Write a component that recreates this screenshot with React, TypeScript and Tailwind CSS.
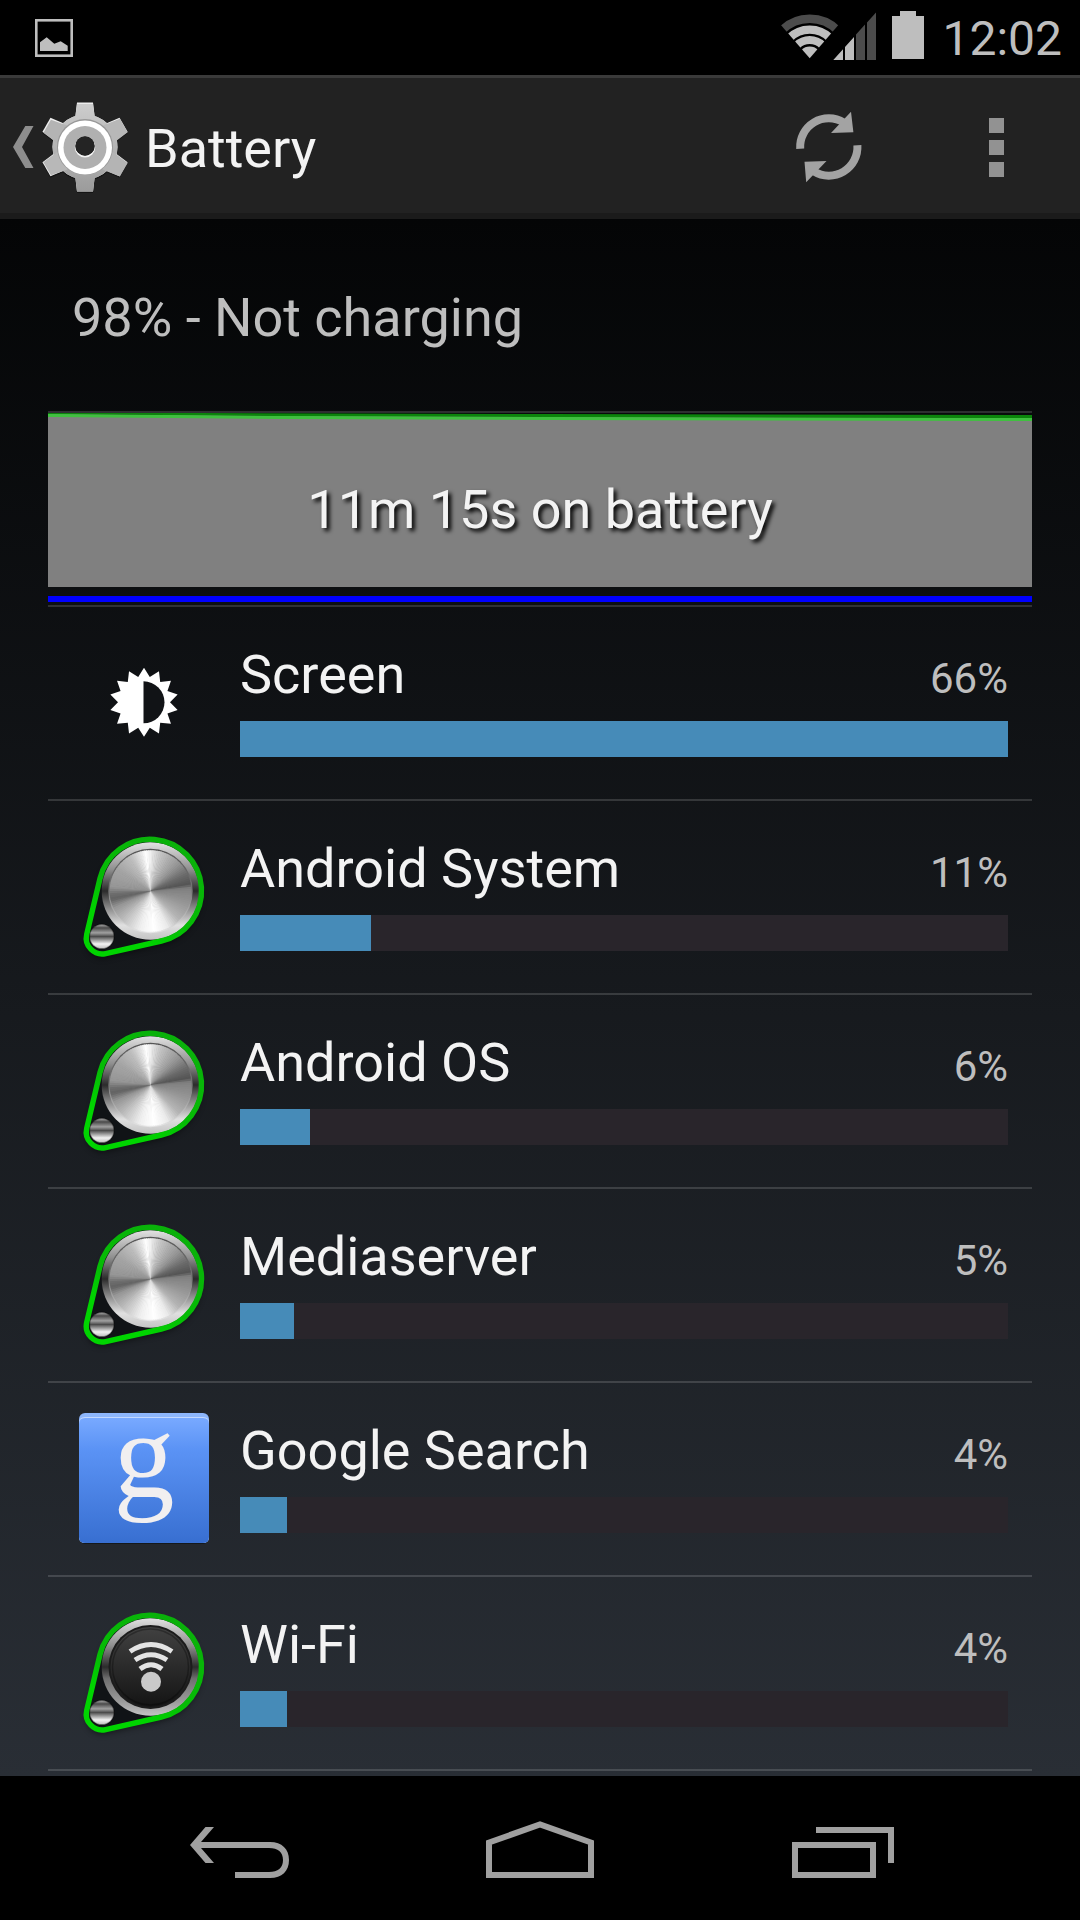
import type { ReactNode } from "react";

type KnobFace = "metal" | "wifi";

type UsageItem = {
  name: string;
  percent: number;
  barWidth: number;
  icon: ReactNode;
};

// Brightness of the brushed metal by angle, clockwise from the top.
const METAL_STOPS: [number, number][] = [
  [0, 236],
  [15, 196],
  [45, 150],
  [66, 104],
  [80, 84],
  [86, 128],
  [110, 150],
  [135, 180],
  [155, 235],
  [175, 255],
  [195, 240],
  [220, 195],
  [245, 150],
  [258, 98],
  [266, 110],
  [276, 150],
  [305, 165],
  [330, 190],
  [345, 228],
  [353, 255],
  [360, 236],
];

const WEDGE_STEP = 3;

function metalShade(angle: number) {
  const next = METAL_STOPS.findIndex(([stop]) => stop > angle);
  if (next < 1) return METAL_STOPS[0][1];
  const [fromAngle, fromShade] = METAL_STOPS[next - 1];
  const [toAngle, toShade] = METAL_STOPS[next];
  const ratio = (angle - fromAngle) / (toAngle - fromAngle);
  return Math.round(fromShade + (toShade - fromShade) * ratio);
}

function polar(cx: number, cy: number, radius: number, angle: number) {
  const rad = (angle * Math.PI) / 180;
  return `${(cx + radius * Math.sin(rad)).toFixed(2)} ${(cy - radius * Math.cos(rad)).toFixed(2)}`;
}

function MetalDisc({ cx, cy, radius }: { cx: number; cy: number; radius: number }) {
  const wedges = Array.from({ length: 360 / WEDGE_STEP }, (_, index) => index * WEDGE_STEP);

  return (
    <g>
      {wedges.map((angle) => {
        const shade = metalShade(angle + WEDGE_STEP / 2);
        return (
          <path
            key={angle}
            d={`M${cx} ${cy}L${polar(cx, cy, radius, angle)}A${radius} ${radius} 0 0 1 ${polar(cx, cy, radius, angle + WEDGE_STEP + 1)}Z`}
            fill={`rgb(${shade} ${shade} ${shade})`}
          />
        );
      })}
    </g>
  );
}

function KnobIcon({ id, face }: { id: string; face: KnobFace }) {
  const belt =
    "M28 53.5A51.5 51.5 0 1 1 89.3 116L33.7 128.6A16 16 0 0 1 14.7 109.3Z";

  return (
    <svg viewBox="0 0 144 144" className="size-36" aria-hidden="true">
      <defs>
        <linearGradient id={`${id}-ring`} x1="0" y1="0" x2="0" y2="1">
          <stop offset="0" stopColor="#e2e2e2" />
          <stop offset="0.28" stopColor="#8f8f8f" />
          <stop offset="0.5" stopColor="#2b2b2b" />
          <stop offset="0.62" stopColor="#6f6f6f" />
          <stop offset="0.85" stopColor={face === "metal" ? "#e0e0e0" : "#9a9a9a"} />
          <stop offset="1" stopColor="#c4c4c4" />
        </linearGradient>
        <linearGradient id={`${id}-edge`} x1="0" y1="0" x2="0" y2="1">
          <stop offset="0" stopColor="#555555" />
          <stop offset="0.5" stopColor="#777777" />
          <stop offset="1" stopColor="#e8e8e8" />
        </linearGradient>
        <linearGradient id={`${id}-face`} x1="0" y1="0" x2="0" y2="1">
          <stop offset="0" stopColor="#414141" />
          <stop offset="1" stopColor="#141414" />
        </linearGradient>
        <linearGradient id={`${id}-small`} x1="0" y1="0" x2="0" y2="1">
          <stop offset="0" stopColor="#b5b5b5" />
          <stop offset="0.15" stopColor="#4a4a4a" />
          <stop offset="0.35" stopColor="#a0a0a0" />
          <stop offset="0.5" stopColor="#4c4c4c" />
          <stop offset="0.8" stopColor="#f2f2f2" />
          <stop offset="1" stopColor="#bdbdbd" />
        </linearGradient>
        <linearGradient id={`${id}-belt`} x1="0.8" y1="0" x2="0.2" y2="1">
          <stop offset="0" stopColor="#0ab00a" />
          <stop offset="0.55" stopColor="#05bc05" />
          <stop offset="0.8" stopColor="#00d400" />
        </linearGradient>
        <filter id={`${id}-shadow`} x="-20%" y="-20%" width="140%" height="140%">
          <feGaussianBlur stdDeviation="3" />
        </filter>
      </defs>
      <path d={belt} fill="#000" opacity="0.5" transform="translate(0 4)" filter={`url(#${id}-shadow)`} />
      <path d={belt} fill="#101316" />
      <circle cx="78.5" cy="66" r="48.8" fill={`url(#${id}-ring)`} />
      {face === "metal" ? (
        <>
          <circle cx="78.5" cy="66" r="42.2" fill={`url(#${id}-edge)`} />
          <MetalDisc cx={78.5} cy={66} radius={40.8} />
        </>
      ) : (
        <>
          <circle cx="78.5" cy="66" r="42" fill="#1c1c1c" />
          <circle cx="78.5" cy="66" r="40" fill={`url(#${id}-face)`} />
          <circle cx="78.5" cy="66" r="38" fill="none" stroke="#000" strokeOpacity="0.3" strokeWidth="1.5" />
          <g fill="none" stroke="#e4e4e4" strokeWidth="5">
            <path d="M58 50.5Q79 36.5 100 50.5" />
            <path d="M63 59Q79 48.5 95 59" />
            <path d="M68 68Q79 59.5 90 68" />
          </g>
          <circle cx="79" cy="80.7" r="10" fill="#c9c9c9" />
        </>
      )}
      <circle cx="29.8" cy="111.5" r="12.3" fill={`url(#${id}-small)`} />
      <circle cx="29.8" cy="111.5" r="12.3" fill="none" stroke="#000" strokeOpacity="0.35" strokeWidth="1.5" />
      <path d={belt} fill="none" stroke={`url(#${id}-belt)`} strokeWidth="5.4" />
    </svg>
  );
}

function BrightnessIcon() {
  const points = Array.from({ length: 28 }, (_, index) =>
    polar(36, 35.3, index % 2 === 0 ? 34.5 : 26, (index * 360) / 28),
  ).join(" ");

  return (
    <svg viewBox="0 0 72 72" className="size-18" aria-hidden="true">
      <polygon points={points} fill="#fff" />
      <path d="M35.5 14.3A21 21 0 0 1 35.5 56.3Z" fill="#111316" />
    </svg>
  );
}

function GoogleIcon() {
  return (
    <svg viewBox="0 1 132 132" className="size-33 overflow-visible" aria-hidden="true">
      <defs>
        <linearGradient id="google-tile" x1="0" y1="0" x2="0" y2="1">
          <stop offset="0" stopColor="#78a9ff" />
          <stop offset="0.25" stopColor="#5b93f5" />
          <stop offset="1" stopColor="#386fd1" />
        </linearGradient>
      </defs>
      <rect x="1" y="2" width="130" height="130" rx="6" fill="#15191c" />
      <rect x="1" y="1" width="130" height="130" rx="6" fill="#8db6fb" />
      <path d="M1 11Q1 5 7 5H125Q131 5 131 11V125Q131 131 125 131H7Q1 131 1 125Z" fill="#c3d8fd" />
      <path d="M1 12Q1 6 7 6H125Q131 6 131 12V125Q131 131 125 131H7Q1 131 1 125Z" fill="url(#google-tile)" />
      <text
        x="66"
        y="85"
        textAnchor="middle"
        fontFamily="'Liberation Serif', serif"
        fontSize="122"
        fill="#f1eff0"
      >
        g
      </text>
    </svg>
  );
}

function GearIcon() {
  return (
    <svg viewBox="0 0 96 96" className="size-24" aria-hidden="true">
      <defs>
        <linearGradient id="gear-body" x1="0" y1="0" x2="0" y2="96" gradientUnits="userSpaceOnUse">
          <stop offset="0" stopColor="#d0d0d0" />
          <stop offset="1" stopColor="#999999" />
        </linearGradient>
        <mask id="gear-hole">
          <rect width="96" height="96" fill="#fff" />
          <circle cx="48" cy="47" r="9.7" fill="#000" />
        </mask>
        <g id="gear-shape">
          <circle cx="48" cy="48" r="32.5" />
          <path d="M40 3.5H56L58 20V76L56 92.5H40L38 76V20Z" />
          <path d="M40 3.5H56L58 20V76L56 92.5H40L38 76V20Z" transform="rotate(60 48 48)" />
          <path d="M40 3.5H56L58 20V76L56 92.5H40L38 76V20Z" transform="rotate(120 48 48)" />
        </g>
      </defs>
      <g mask="url(#gear-hole)">
        <use href="#gear-shape" fill="#000" opacity="0.4" y="1.5" />
        <use href="#gear-shape" fill="#eeeeee" />
      </g>
      <g mask="url(#gear-hole)">
        <circle cx="48" cy="48" r="32.5" fill="url(#gear-body)" />
        <path d="M40 5H56L58 20V76L56 92.5H40L38 76V20Z" fill="url(#gear-body)" />
        <path d="M40.5 4H56L58 20V76L55 92H40L38 76V20Z" fill="#b8b8b8" transform="rotate(60 48 48.6)" />
        <path d="M40 4H55.5L58 20V76L56 92H41L38 76V20Z" fill="#b4b4b4" transform="rotate(120 48 48.6)" />
        <circle cx="48" cy="48" r="28" fill="#989898" />
        <circle cx="48" cy="48.5" r="27" fill="#fff" />
        <circle cx="48" cy="48.5" r="21.5" fill="#b0b0b0" />
        <circle cx="48" cy="48.4" r="10.2" fill="#f4f4f4" />
      </g>
      <circle cx="48" cy="47" r="9.7" fill="#242424" />
    </svg>
  );
}

function StatusBar() {
  return (
    <div className="flex h-[75px] items-center bg-black pr-[18px] pb-[3px] pl-[35px] text-[#bebebe]">
      <svg viewBox="0 0 38 42" className="h-[42px] w-[38px]" aria-hidden="true">
        <rect x="1.3" y="5.3" width="35.4" height="35.4" fill="none" stroke="currentColor" strokeWidth="2.6" />
        <path d="M5 27.3L11.7 22.3L19.3 28.7L25.7 26.3L32.7 30.7V36H5Z" fill="currentColor" />
      </svg>
      <div className="ml-auto flex items-center gap-4">
        <svg viewBox="0 0 96 48" className="h-12 w-24" aria-hidden="true">
          <defs>
            <clipPath id="wifi-fan">
              <path d="M29.7 46.3L-10 0.3L29.7 -20L69.4 0.3Z" />
            </clipPath>
          </defs>
          <g clipPath="url(#wifi-fan)" fill="none">
            <circle cx="29.7" cy="46.3" r="39.5" stroke="#4c4c4c" strokeWidth="8.4" />
            <circle cx="29.7" cy="46.3" r="28.7" stroke="currentColor" strokeWidth="8.4" />
            <circle cx="29.7" cy="46.3" r="18.2" stroke="currentColor" strokeWidth="8" />
            <circle cx="29.7" cy="46.3" r="11.8" fill="currentColor" />
          </g>
          <path d="M53.3 48L63 37.2V48ZM65 35V48H74V25Z" fill="currentColor" />
          <path d="M76 22.6L85 12.6V48H76ZM87 10.4L96 0.4V48H87Z" fill="#4c4c4c" />
        </svg>
        <svg viewBox="0 0 32 50" className="h-[50px] w-8" aria-hidden="true">
          <path d="M8 0H24V5H32V48H0V5H8Z" fill="currentColor" />
        </svg>
        <time className="pt-1.5 pl-0.5 text-5xl leading-none">12:02</time>
      </div>
    </div>
  );
}

function ActionBar() {
  return (
    <header className="flex h-36 items-stretch border-t-[3px] border-b-[6px] border-t-[#3a3a3a] border-b-[#1b1b1b] bg-[#222222] pt-[3px]">
      <button type="button" className="flex items-center pl-[13px]" aria-label="Navigate up">
        <svg viewBox="0 0 21 42" className="h-[42px] w-[21px]" aria-hidden="true">
          <path d="M12.3 0H20.5L9 21L20.5 42H12.3L0 21Z" fill="#8e8e8e" />
        </svg>
        <span className="ml-[3px]">
          <GearIcon />
        </span>
      </button>
      <h1 className="ml-3 self-center pt-1 text-[54px] leading-none text-[#f3f3f3]">Battery</h1>
      <div className="ml-auto flex">
        <button type="button" className="flex w-42 items-center justify-center" aria-label="Refresh">
          <svg viewBox="0 0 72 72" className="size-18" aria-hidden="true">
            <g fill="none" stroke="#a3a3a3" strokeWidth="8">
              <path d="M8.2 37.7A28.6 28.6 0 0 1 51.8 11.6" />
              <path d="M65.4 34.3A28.6 28.6 0 0 1 21.8 60.4" />
            </g>
            <path d="M59 0.7L61.4 21.3L39 22ZM12.5 50.7L34.5 50L14.2 71.3Z" fill="#a3a3a3" />
          </svg>
        </button>
        <button
          type="button"
          className="flex w-42 flex-col items-center justify-center gap-[7px]"
          aria-label="More options"
        >
          <span className="size-[15px] bg-[#929292]" />
          <span className="size-[15px] bg-[#929292]" />
          <span className="size-[15px] bg-[#929292]" />
        </button>
      </div>
    </header>
  );
}

function BatteryHistory() {
  return (
    <section className="grid h-[194px] border-t-2 border-white/15">
      <div className="col-start-1 row-start-1">
        <svg viewBox="0 0 984 174" preserveAspectRatio="none" className="block h-[174px] w-full" aria-hidden="true">
          <path d="M0 1L230 3L500 4L984 5V174H0Z" fill="#808080" />
          <path d="M0 0H150L500 1L984 2V5L500 4L230 3L0 1Z" fill="#0b850b" />
          <path d="M0 1L230 3L500 4L984 5V8L500 7L230 6L0 4Z" fill="#40c040" />
        </svg>
        <div className="mt-[9px] h-1.5 bg-[#0000ff]" />
      </div>
      <p className="col-start-1 row-start-1 self-center pt-0.5 text-center text-[54px] leading-none text-[#f3f3f3] [text-shadow:3px_3px_4px_#000000]">
        11m 15s on battery
      </p>
    </section>
  );
}

const usageItems: UsageItem[] = [
  { name: "Screen", percent: 66, barWidth: 100, icon: <BrightnessIcon /> },
  { name: "Android System", percent: 11, barWidth: 17.1, icon: <KnobIcon id="system" face="metal" /> },
  { name: "Android OS", percent: 6, barWidth: 9.1, icon: <KnobIcon id="os" face="metal" /> },
  { name: "Mediaserver", percent: 5, barWidth: 7, icon: <KnobIcon id="media" face="metal" /> },
  { name: "Google Search", percent: 4, barWidth: 6.1, icon: <GoogleIcon /> },
  { name: "Wi-Fi", percent: 4, barWidth: 6.1, icon: <KnobIcon id="wifi" face="wifi" /> },
];

function UsageRow({ item }: { item: UsageItem }) {
  return (
    <li className="flex h-[194px] gap-6 border-b-2 border-white/15 px-6">
      <div className="flex w-36 shrink-0 items-center justify-center">{item.icon}</div>
      <div className="flex-1 pt-8">
        <div className="flex items-baseline justify-between">
          <h2 className="text-[54px] leading-[72px] text-[#f3f3f3]">{item.name}</h2>
          <span className="text-[42px] leading-[48px] text-[#bebebe]">{item.percent}%</span>
        </div>
        <div className="mt-2.5 h-9 bg-[#29252b]">
          <div className="h-full bg-[#468bb8]" style={{ width: `${item.barWidth}%` }} />
        </div>
      </div>
    </li>
  );
}

function NavigationBar() {
  return (
    <nav className="flex h-36 items-center justify-center bg-black text-[#a0a0a0]">
      <button type="button" className="flex w-75 justify-center" aria-label="Back">
        <svg viewBox="0 0 100 60" className="h-15 w-25" aria-hidden="true">
          <path
            d="M15.5 9H24L11 24H80C92 24 99 31 99 42C99 53 92 60 80 60H45V54H79C88 54 93 50 93 42C93 34 88 30 79 30H11L24 45H15.5L0 27Z"
            fill="currentColor"
          />
        </svg>
      </button>
      <button type="button" className="flex w-75 justify-center" aria-label="Home">
        <svg viewBox="0 0 108 60" className="h-15 w-27" aria-hidden="true">
          <path d="M3 57V24.5L54 6.5L105 24.5V57Z" fill="none" stroke="currentColor" strokeWidth="6" />
        </svg>
      </button>
      <button type="button" className="flex w-75 justify-center" aria-label="Recent apps">
        <svg viewBox="0 0 108 60" className="h-15 w-27" aria-hidden="true">
          <g fill="none" stroke="currentColor" strokeWidth="6">
            <path d="M9 27H87V57H9Z" />
            <path d="M30 12H105V45" />
          </g>
        </svg>
      </button>
    </nav>
  );
}

export default function App() {
  return (
    <div className="flex min-h-screen flex-col bg-black font-['Roboto',sans-serif]">
      <StatusBar />
      <ActionBar />
      <main className="flex-1 bg-linear-to-b/srgb from-[#040506] to-[#292e35] px-12">
        <p className="flex h-48 items-center px-6 pt-1.5 text-[54px] leading-none text-[#bebebe]">
          98% - Not charging
        </p>
        <BatteryHistory />
        <ul className="border-t-2 border-white/15">
          {usageItems.map((item) => (
            <UsageRow key={item.name} item={item} />
          ))}
        </ul>
      </main>
      <NavigationBar />
    </div>
  );
}
